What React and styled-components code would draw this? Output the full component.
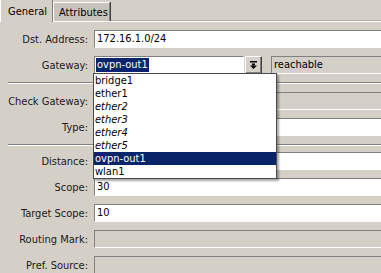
import React from 'react';
import styled, { createGlobalStyle } from 'styled-components';

const GlobalStyle = createGlobalStyle`
  body {
    margin: 0;
    background: #d4d0c8;
    font-family: "DejaVu Sans Condensed", "Liberation Sans", Arial, sans-serif;
    font-size: 11px;
    color: #000;
    overflow: hidden;
  }
`;

const Window = styled.div`
  width: 381px;
  height: 273px;
  overflow: hidden;
  background: #d4d0c8;
`;

const TabBar = styled.div`
  display: flex;
  align-items: flex-end;
  height: 22px;
  box-sizing: border-box;
  border-bottom: 1px solid #ffffff;
  box-shadow: inset 0 -1px 0 #b4b0a8;
`;

const Tab = styled.div`
  box-sizing: border-box;
  height: ${(p) => (p.$active ? '23px' : '19px')};
  margin-bottom: ${(p) => (p.$active ? '-1px' : '0')};
  padding: ${(p) => (p.$active ? '6px 0 0 7px' : '3px 0 0 5px')};
  background: ${(p) => (p.$active ? '#d4d0c8' : '#c8c4bc')};
  border-left: 1px solid #ffffff;
  border-top: ${(p) => (p.$active ? 'none' : '1px solid #ffffff')};
  border-right: 1px solid #808080;
  box-shadow: ${(p) => (p.$active ? 'none' : '1px 0 0 #404040')};
  width: ${(p) => p.$width}px;
  font-size: 11px;
  line-height: 14px;
  white-space: nowrap;
`;

const Form = styled.div`
  display: flex;
  flex-direction: column;
  padding-top: 8px;
`;

const Row = styled.div`
  display: grid;
  grid-template-columns: 88px 1fr;
  column-gap: 6px;
  align-items: center;
  height: 18px;
  margin-bottom: 8px;
`;

const Label = styled.div`
  text-align: right;
  white-space: nowrap;
  color: #1a1a1a;
`;

const Field = styled.div`
  box-sizing: border-box;
  height: 18px;
  border: 1px solid;
  border-color: #808080 #ffffff #ffffff #808080;
  border-right: none;
  background: ${(p) => (p.$disabled ? '#d4d0c8' : '#ffffff')};
  padding-left: 2px;
  line-height: 16px;
  white-space: nowrap;
`;

const GatewayLine = styled.div`
  display: flex;
  align-items: center;
  height: 18px;
`;

const Combo = styled.div`
  position: relative;
  width: 150px;
  box-sizing: border-box;
  height: 18px;
  border: 1px solid;
  border-color: #808080 #ffffff #ffffff #808080;
  background: #ffffff;
  padding: 1px 0 0 1px;
`;

const Selected = styled.span`
  display: inline-block;
  background: #0a246a;
  color: #ffffff;
  line-height: 14px;
  padding: 0 1px;
`;

const DropButton = styled.div`
  box-sizing: border-box;
  width: 17px;
  height: 18px;
  margin-left: 1px;
  display: flex;
  align-items: center;
  justify-content: center;
  background: #d4d0c8;
  border: 1px solid;
  border-color: #ffffff #404040 #404040 #ffffff;
  box-shadow: inset -1px -1px 0 #808080;
`;

const Status = styled(Field)`
  flex: 1;
  margin-left: 9px;
`;

const Separator = styled.div`
  margin: ${(p) => (p.$tight ? '0 0 6px 8px' : '0 0 8px 8px')};
  height: 0;
  border-top: 1px solid #808080;
  border-bottom: 1px solid #ffffff;
`;

const List = styled.div`
  position: absolute;
  left: -2px;
  top: 16px;
  width: 184px;
  box-sizing: border-box;
  border: 1px solid #4a4a4a;
  background: #ffffff;
  box-shadow: 2px 2px 2px rgba(0, 0, 0, 0.35);
  z-index: 5;
`;

const Item = styled.div`
  height: 13px;
  line-height: 13px;
  padding-left: 1px;
  font-style: ${(p) => (p.$italic ? 'italic' : 'normal')};
  background: ${(p) => (p.$selected ? '#0a246a' : 'transparent')};
  color: ${(p) => (p.$selected ? '#ffffff' : '#000000')};
`;

const ArrowIcon = () => (
  <svg width="7" height="8" viewBox="0 0 7 8">
    <rect x="0" y="0" width="7" height="1.5" fill="#000" />
    <rect x="2" y="2.5" width="3" height="2" fill="#000" />
    <polygon points="0,4.5 7,4.5 3.5,8" fill="#000" />
  </svg>
);

const interfaces = [
  { name: 'bridge1' },
  { name: 'ether1' },
  { name: 'ether2', italic: true },
  { name: 'ether3', italic: true },
  { name: 'ether4', italic: true },
  { name: 'ether5', italic: true },
  { name: 'ovpn-out1', selected: true },
  { name: 'wlan1' },
];

const App = () => {
  return (
    <Window>
      <GlobalStyle />
      <TabBar>
        <Tab $active $width={53}>General</Tab>
        <Tab $width={57}>Attributes</Tab>
      </TabBar>
      <Form>
        <Row>
          <Label>Dst. Address:</Label>
          <Field>172.16.1.0/24</Field>
        </Row>
        <Row>
          <Label>Gateway:</Label>
          <GatewayLine>
            <Combo>
              <Selected>ovpn-out1</Selected>
              <List>
                {interfaces.map((it) => (
                  <Item key={it.name} $italic={it.italic} $selected={it.selected}>
                    {it.name}
                  </Item>
                ))}
              </List>
            </Combo>
            <DropButton>
              <ArrowIcon />
            </DropButton>
            <Status $disabled>reachable</Status>
          </GatewayLine>
        </Row>
        <Separator />
        <Row>
          <Label>Check Gateway:</Label>
          <Field $disabled />
        </Row>
        <Row>
          <Label>Type:</Label>
          <Field />
        </Row>
        <Separator $tight />
        <Row>
          <Label>Distance:</Label>
          <Field />
        </Row>
        <Row>
          <Label>Scope:</Label>
          <Field>30</Field>
        </Row>
        <Row>
          <Label>Target Scope:</Label>
          <Field>10</Field>
        </Row>
        <Row>
          <Label>Routing Mark:</Label>
          <Field $disabled />
        </Row>
        <Row>
          <Label>Pref. Source:</Label>
          <Field $disabled />
        </Row>
      </Form>
    </Window>
  );
};

export default App;
